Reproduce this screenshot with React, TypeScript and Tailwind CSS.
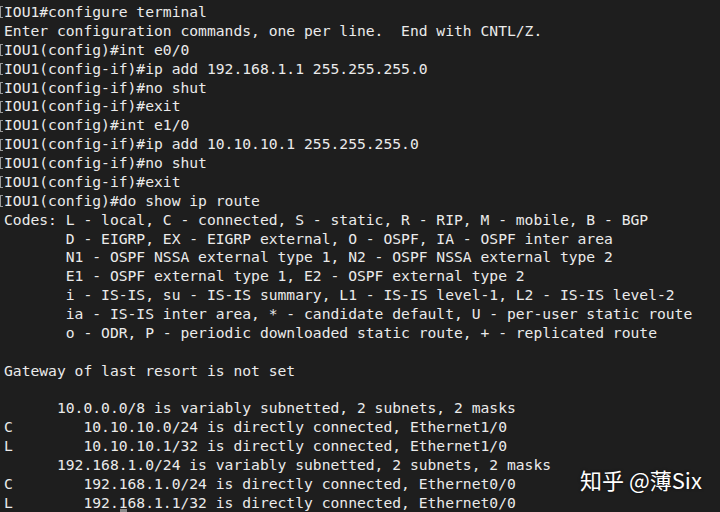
const lines: { text: string; mark?: boolean }[] = [
  { text: "IOU1#configure terminal", mark: true },
  { text: "Enter configuration commands, one per line.  End with CNTL/Z." },
  { text: "IOU1(config)#int e0/0", mark: true },
  { text: "IOU1(config-if)#ip add 192.168.1.1 255.255.255.0", mark: true },
  { text: "IOU1(config-if)#no shut", mark: true },
  { text: "IOU1(config-if)#exit", mark: true },
  { text: "IOU1(config)#int e1/0", mark: true },
  { text: "IOU1(config-if)#ip add 10.10.10.1 255.255.255.0", mark: true },
  { text: "IOU1(config-if)#no shut", mark: true },
  { text: "IOU1(config-if)#exit", mark: true },
  { text: "IOU1(config)#do show ip route", mark: true },
  { text: "Codes: L - local, C - connected, S - static, R - RIP, M - mobile, B - BGP" },
  { text: "       D - EIGRP, EX - EIGRP external, O - OSPF, IA - OSPF inter area" },
  { text: "       N1 - OSPF NSSA external type 1, N2 - OSPF NSSA external type 2" },
  { text: "       E1 - OSPF external type 1, E2 - OSPF external type 2" },
  { text: "       i - IS-IS, su - IS-IS summary, L1 - IS-IS level-1, L2 - IS-IS level-2" },
  { text: "       ia - IS-IS inter area, * - candidate default, U - per-user static route" },
  { text: "       o - ODR, P - periodic downloaded static route, + - replicated route" },
  { text: "" },
  { text: "Gateway of last resort is not set" },
  { text: "" },
  { text: "      10.0.0.0/8 is variably subnetted, 2 subnets, 2 masks" },
  { text: "C        10.10.10.0/24 is directly connected, Ethernet1/0" },
  { text: "L        10.10.10.1/32 is directly connected, Ethernet1/0" },
  { text: "      192.168.1.0/24 is variably subnetted, 2 subnets, 2 masks" },
  { text: "C        192.168.1.0/24 is directly connected, Ethernet0/0" },
  { text: "L        192.168.1.1/32 is directly connected, Ethernet0/0" },
];

export default function App() {
  return (
    <div className="relative w-[720px] h-[512px] overflow-hidden bg-[#1e1e1e]">
      {/* terminal output */}
      <div className="flex flex-col pt-[3px] font-['DejaVu_Sans_Mono',monospace] text-[14.66px] leading-[18.88px] text-[#ebebeb]">
        {lines.map((line, i) => (
          <div key={i} className="flex items-center h-[18.88px]">
            <div className="w-[4px] h-full flex items-center shrink-0">
              {line.mark && (
                <div className="w-[3px] h-[12px] border-l-[1.5px] border-y border-[#9a9a9a]" />
              )}
            </div>
            <pre className="font-['DejaVu_Sans_Mono',monospace] whitespace-pre">{line.text}</pre>
          </div>
        ))}
      </div>

      {/* mouse cursor mark */}
      <div className="absolute left-[120px] top-[509px] w-[7px] h-[3px] bg-[#8a8a8a]" />

      {/* watermark */}
      <div className="absolute left-[580px] top-[465px] font-['Noto_Sans_CJK_SC',sans-serif] text-[22px] leading-[29px] text-white [text-shadow:0_0_3px_rgba(0,0,0,0.6)]">
        知乎 @薄Six
      </div>
    </div>
  );
}
